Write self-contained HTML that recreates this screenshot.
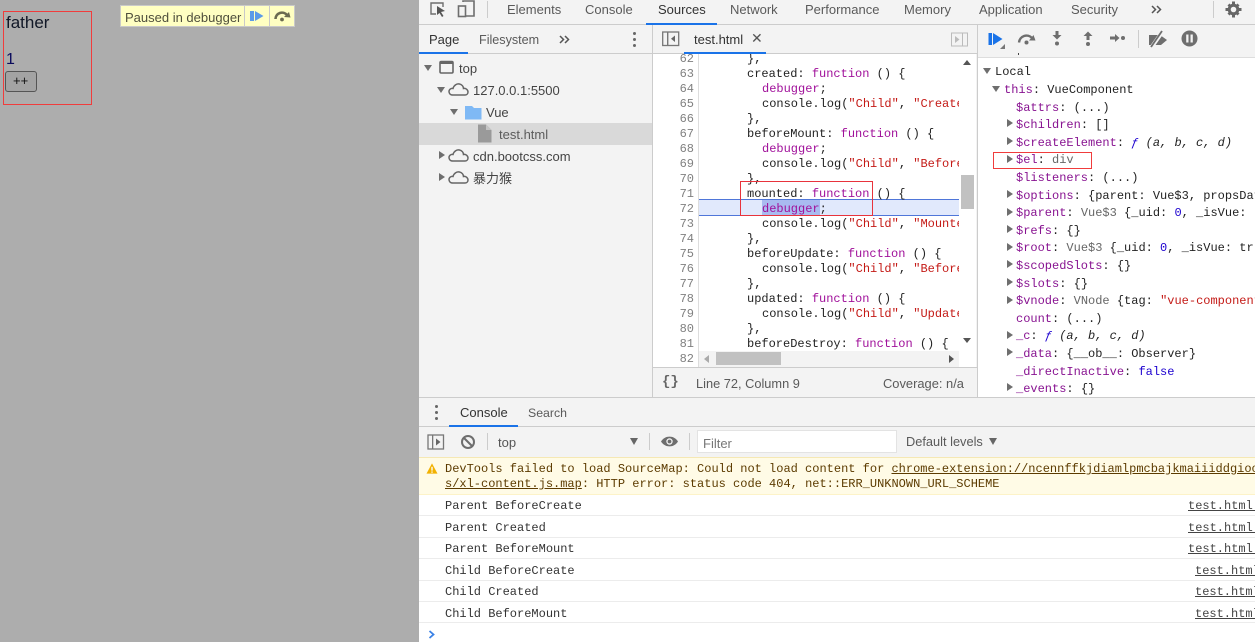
<!DOCTYPE html>
<html><head><meta charset="utf-8"><title>DevTools</title>
<style>
html,body{margin:0;padding:0}
body{position:relative;width:1255px;height:642px;overflow:hidden;background:#fff;font-family:"Liberation Sans","Noto Sans CJK SC",sans-serif;font-size:13px;color:#333}
div,span.a,svg{position:absolute}
.t{position:absolute;white-space:pre;line-height:16px;height:16px;margin-top:1px}
.tab{color:#5a5a5a;font-size:13px}
.m{position:absolute;white-space:pre;font-family:"Liberation Mono",monospace;font-size:12px;line-height:15px;height:15px;color:#222;margin-top:1px}
#sc .m{margin-top:2px}
.k{color:#a0109a}.s{color:#c41a16}.n{color:#1c00cf}.p{color:#881391}.g{color:#555}.gy{color:#666}.o{color:#222}.i{font-style:italic}
.ln{position:absolute;left:654px;width:40px;text-align:right;font-family:"Liberation Mono",monospace;font-size:12px;line-height:15px;height:15px;color:#808080;margin-top:1px}
.tr{position:absolute;width:0;height:0;border:0 solid transparent}
.r{border-left:6px solid #6e6e6e;border-top:4.5px solid transparent;border-bottom:4.5px solid transparent}
.d{border-top:6px solid #6e6e6e;border-left:4.5px solid transparent;border-right:4.5px solid transparent}
.row{position:absolute;left:419px;width:836px;height:1px;background:#ececec}
.u{text-decoration:underline}
</style></head><body>

<!-- page -->
<div style="left:0;top:0;width:419px;height:642px;background:#adadad"></div>
<div style="left:3px;top:11px;width:87px;height:92px;border:1px solid #f03c3c"></div>
<div class="t" style="left:6px;top:13px;font-size:17px;line-height:18px;height:18px;color:#111827">father</div>
<div class="t" style="left:6px;top:50px;font-size:16px;line-height:18px;height:18px;color:#0a0a5c">1</div>
<div style="left:5px;top:71px;width:30px;height:19px;background:#a3a3a3;border:1px solid #555;border-radius:3px"></div>
<div class="t" style="left:13px;top:72px;font-size:13px;color:#111">++</div>
<div style="left:120px;top:5px;width:173px;height:20px;background:#ffffc2;border:1px solid #c9c9c9"></div>
<div style="left:244px;top:6px;width:1px;height:20px;background:#c9c9c9"></div>
<div style="left:269px;top:6px;width:1px;height:20px;background:#c9c9c9"></div>
<div class="t" style="left:125px;top:9px;font-size:13px;color:#4f4f3c">Paused in debugger</div>
<svg style="left:249px;top:10px" width="15" height="12" viewBox="0 0 15 12"><rect x="1" y="1" width="4" height="10" fill="#5c9be8"/><path d="M6 1L14.500 6L6 11Z" fill="#5c9be8"/></svg>
<svg style="left:273px;top:9px" width="18" height="14" viewBox="0 0 18 14"><path d="M2.500 10A6.500 6.500 0 0 1 14 6" fill="none" stroke="#6b6b50" stroke-width="2.600"/><path d="M11 8L17.500 8.500L16 3Z" fill="#6b6b50"/><circle cx="9" cy="10.500" r="1.900" fill="#6b6b50"/></svg>

<!-- devtools bg -->
<div style="left:419px;top:0;width:836px;height:457px;background:#f3f3f3"></div>
<div style="left:419px;top:24px;width:836px;height:1px;background:#ccc"></div>
<svg style="left:429px;top:1px" width="18" height="17" viewBox="0 0 18 17"><path d="M7 13H2V2H14V6" fill="none" stroke="#6e6e6e" stroke-width="1.400"/><path d="M8 5L16 10L12 11L14.500 15L13 16L10.500 12L8 14Z" fill="#555"/></svg>
<svg style="left:457px;top:0" width="19" height="18" viewBox="0 0 19 18"><path d="M6 2V1H17V16H9" fill="none" stroke="#6e6e6e" stroke-width="1.600"/><rect x="1.500" y="6" width="7" height="10.500" fill="none" stroke="#6e6e6e" stroke-width="1.600"/></svg>
<div style="left:487px;top:1px;width:1px;height:17px;background:#ccc"></div>
<div class="t tab" style="left:507px;top:1px">Elements</div>
<div class="t tab" style="left:585px;top:1px">Console</div>
<div class="t tab" style="left:658px;top:1px;color:#333">Sources</div>
<div style="left:646px;top:23px;width:71px;height:2px;background:#1a73e8"></div>
<div class="t tab" style="left:730px;top:1px">Network</div>
<div class="t tab" style="left:805px;top:1px">Performance</div>
<div class="t tab" style="left:904px;top:1px">Memory</div>
<div class="t tab" style="left:979px;top:1px">Application</div>
<div class="t tab" style="left:1071px;top:1px">Security</div>
<svg style="left:1151px;top:5px" width="11" height="9" viewBox="0 0 11 9"><path d="M1 1L4.500 4.500L1 8M6 1L9.500 4.500L6 8" fill="none" stroke="#555" stroke-width="1.500"/></svg>
<div style="left:1213px;top:1px;width:1px;height:17px;background:#ccc"></div>
<svg style="left:1225px;top:1px" width="17" height="17" viewBox="0 0 17 17"><circle cx="8.500" cy="8.500" r="4.300" fill="none" stroke="#666" stroke-width="3"/><path d="M7 0.500H10V3H7ZM7 14H10V16.500H7ZM0.500 7H3V10H0.500ZM14 7H16.500V10H14ZM2.500 4.500L4.500 2.500L6 4L4 6ZM11 13L13 11L14.500 12.500L12.500 14.500ZM12.500 2.500L14.500 4.500L13 6L11 4ZM2.500 12.500L4 11L6 13L4.500 14.500Z" fill="#666"/></svg>

<!-- navigator -->
<div style="left:419px;top:53px;width:836px;height:1px;background:#ccc"></div>
<div style="left:652px;top:25px;width:1px;height:372px;background:#ccc"></div>
<div class="t tab" style="left:429px;top:31px;color:#333">Page</div>
<div style="left:419px;top:52px;width:49px;height:2px;background:#1a73e8"></div>
<div class="t tab" style="left:479px;top:31px;font-size:12.600px">Filesystem</div>
<svg style="left:559px;top:35px" width="11" height="9" viewBox="0 0 11 9"><path d="M1 1L4.500 4.500L1 8M6 1L9.500 4.500L6 8" fill="none" stroke="#555" stroke-width="1.500"/></svg>
<div style="left:633px;top:32px;width:3px;height:3px;border-radius:2px;background:#666"></div>
<div style="left:633px;top:38px;width:3px;height:3px;border-radius:2px;background:#666"></div>
<div style="left:633px;top:44px;width:3px;height:3px;border-radius:2px;background:#666"></div>

<div style="left:419px;top:123px;width:233px;height:22px;background:#d9d9d9"></div>
<div class="tr d" style="left:424px;top:65px"></div>
<svg style="left:439px;top:60px" width="16" height="15" viewBox="0 0 16 15"><rect x="1" y="1.500" width="13" height="11.500" rx="1.200" fill="none" stroke="#666" stroke-width="1.600"/><rect x="1" y="1.500" width="13" height="2.500" fill="#666"/></svg>
<div class="t" style="left:459px;top:60px;color:#444">top</div>
<div class="tr d" style="left:437px;top:87px"></div>
<svg style="left:448px;top:82px" width="22" height="15" viewBox="0 0 22 15"><path d="M5 13C2 13 1 11 1 9.500C1 7.500 3 6 5 6.500C6 3 9 1.500 11.500 2C14 2.500 15.500 4.500 15.500 6.500C18 6 20 8 20 10C20 12 18.500 13 17 13Z" fill="none" stroke="#666" stroke-width="1.500"/></svg>
<div class="t" style="left:473px;top:82px;color:#444">127.0.0.1:5500</div>
<div class="tr d" style="left:450px;top:109px"></div>
<svg style="left:465px;top:105px" width="17" height="15" viewBox="0 0 17 15"><path d="M0 1H7L9 3H16.500V14.500H0Z" fill="#7fb9f5"/></svg>
<div class="t" style="left:486px;top:104px;color:#444">Vue</div>
<svg style="left:478px;top:124px" width="14" height="19" viewBox="0 0 14 19"><path d="M0 0.500H8L13.500 6V18.500H0Z" fill="#9a9a9a"/><path d="M8 0.500L13.500 6H8Z" fill="#c4c4c4"/></svg>
<div class="t" style="left:499px;top:126px;color:#5c5c5c">test.html</div>
<div class="tr r" style="left:439px;top:151px"></div>
<svg style="left:448px;top:148px" width="22" height="15" viewBox="0 0 22 15"><path d="M5 13C2 13 1 11 1 9.500C1 7.500 3 6 5 6.500C6 3 9 1.500 11.500 2C14 2.500 15.500 4.500 15.500 6.500C18 6 20 8 20 10C20 12 18.500 13 17 13Z" fill="none" stroke="#666" stroke-width="1.500"/></svg>
<div class="t" style="left:473px;top:148px;color:#444">cdn.bootcss.com</div>
<div class="tr r" style="left:439px;top:173px"></div>
<svg style="left:448px;top:170px" width="22" height="15" viewBox="0 0 22 15"><path d="M5 13C2 13 1 11 1 9.500C1 7.500 3 6 5 6.500C6 3 9 1.500 11.500 2C14 2.500 15.500 4.500 15.500 6.500C18 6 20 8 20 10C20 12 18.500 13 17 13Z" fill="none" stroke="#666" stroke-width="1.500"/></svg>
<div class="t" style="left:473px;top:170px;color:#444">暴力猴</div>

<!-- editor header -->
<svg style="left:662px;top:31px" width="18" height="16" viewBox="0 0 18 16"><rect x="0.700" y="1" width="16" height="13.500" fill="none" stroke="#777" stroke-width="1.300"/><rect x="5" y="1" width="1.400" height="13.500" fill="#777"/><path d="M13 4.500V11L9 7.700Z" fill="#666"/></svg>
<div class="t" style="left:694px;top:31px;font-size:13px;color:#333">test.html</div>
<div class="t" style="left:751px;top:29px;font-size:14px;color:#555">✕</div>
<div style="left:684px;top:52px;width:82px;height:2px;background:#1a73e8"></div>
<svg style="left:951px;top:32px" width="17" height="15" viewBox="0 0 17 15"><rect x="0.500" y="1" width="16" height="13" fill="none" stroke="#bbb" stroke-width="1"/><rect x="11" y="1" width="1" height="13" fill="#bbb"/><path d="M4 4V11L8.500 7.500Z" fill="#bbb"/></svg>

<!-- code -->
<div style="left:653px;top:54px;width:323px;height:313px;background:#fff;overflow:hidden"></div>
<div style="left:698px;top:54px;width:1px;height:313px;background:#ddd"></div>
<div style="left:699px;top:200px;width:260px;height:15px;background:#e1e9fc"></div>
<div style="left:699px;top:199px;width:260px;height:1px;background:#4f76d9"></div>
<div style="left:699px;top:215px;width:260px;height:1px;background:#4f76d9"></div>
<div style="left:762px;top:200px;width:58px;height:15px;background:#a9bbf0"></div>

<div style="left:653px;top:54px;width:306px;height:313px;overflow:hidden">
<div class="ln" style="left:0;top:-3px;width:41px">62</div><div class="m" style="left:94px;top:-3px">},</div>
<div class="ln" style="left:0;top:12px;width:41px">63</div><div class="m" style="left:94px;top:12px">created: <span class="k">function</span> () {</div>
<div class="ln" style="left:0;top:27px;width:41px">64</div><div class="m" style="left:109px;top:27px"><span class="k">debugger</span>;</div>
<div class="ln" style="left:0;top:42px;width:41px">65</div><div class="m" style="left:109px;top:42px">console.log(<span class="s">"Child"</span>, <span class="s">"Created"</span></div>
<div class="ln" style="left:0;top:57px;width:41px">66</div><div class="m" style="left:94px;top:57px">},</div>
<div class="ln" style="left:0;top:72px;width:41px">67</div><div class="m" style="left:94px;top:72px">beforeMount: <span class="k">function</span> () {</div>
<div class="ln" style="left:0;top:87px;width:41px">68</div><div class="m" style="left:109px;top:87px"><span class="k">debugger</span>;</div>
<div class="ln" style="left:0;top:102px;width:41px">69</div><div class="m" style="left:109px;top:102px">console.log(<span class="s">"Child"</span>, <span class="s">"BeforeM"</span></div>
<div class="ln" style="left:0;top:117px;width:41px">70</div><div class="m" style="left:94px;top:117px">},</div>
<div class="ln" style="left:0;top:132px;width:41px">71</div><div class="m" style="left:94px;top:132px">mounted: <span class="k">function</span> () {</div>
<div class="ln" style="left:0;top:147px;width:41px">72</div><div class="m" style="left:109px;top:147px"><span class="k">debugger</span>;</div>
<div class="ln" style="left:0;top:162px;width:41px">73</div><div class="m" style="left:109px;top:162px">console.log(<span class="s">"Child"</span>, <span class="s">"Mounted"</span></div>
<div class="ln" style="left:0;top:177px;width:41px">74</div><div class="m" style="left:94px;top:177px">},</div>
<div class="ln" style="left:0;top:192px;width:41px">75</div><div class="m" style="left:94px;top:192px">beforeUpdate: <span class="k">function</span> () {</div>
<div class="ln" style="left:0;top:207px;width:41px">76</div><div class="m" style="left:109px;top:207px">console.log(<span class="s">"Child"</span>, <span class="s">"BeforeU"</span></div>
<div class="ln" style="left:0;top:222px;width:41px">77</div><div class="m" style="left:94px;top:222px">},</div>
<div class="ln" style="left:0;top:237px;width:41px">78</div><div class="m" style="left:94px;top:237px">updated: <span class="k">function</span> () {</div>
<div class="ln" style="left:0;top:252px;width:41px">79</div><div class="m" style="left:109px;top:252px">console.log(<span class="s">"Child"</span>, <span class="s">"Updated"</span></div>
<div class="ln" style="left:0;top:267px;width:41px">80</div><div class="m" style="left:94px;top:267px">},</div>
<div class="ln" style="left:0;top:282px;width:41px">81</div><div class="m" style="left:94px;top:282px">beforeDestroy: <span class="k">function</span> () {</div>
<div class="ln" style="left:0;top:297px;width:41px">82</div>
</div>
<div style="left:740px;top:181px;width:131px;height:33px;border:1px solid #e8333c"></div>

<!-- scrollbars -->
<div style="left:959px;top:54px;width:17px;height:313px;background:#fff"></div>
<div style="left:961px;top:175px;width:13px;height:34px;background:#c1c1c1"></div>
<div class="tr" style="left:963px;top:60px;border-width:0 4px 5px 4px;border-color:transparent transparent #555 transparent"></div>
<div class="tr" style="left:963px;top:338px;border-width:5px 4px 0 4px;border-color:#555 transparent transparent transparent"></div>
<div style="left:699px;top:351px;width:260px;height:16px;background:#f3f3f3"></div>
<div style="left:716px;top:352px;width:65px;height:13px;background:#c1c1c1"></div>
<div class="tr" style="left:704px;top:355px;border-width:4px 5px 4px 0;border-color:transparent #aaa transparent transparent"></div>
<div class="tr" style="left:949px;top:355px;border-width:4px 0 4px 5px;border-color:transparent transparent transparent #555"></div>

<!-- editor footer -->
<div style="left:653px;top:367px;width:324px;height:1px;background:#ccc"></div>
<div class="t" style="left:662px;top:373px;font-family:'Liberation Mono',monospace;font-size:14px;font-weight:bold;color:#666">{}</div>
<div class="t" style="left:696px;top:375px;font-size:12.800px;color:#5a5a5a">Line 72, Column 9</div>
<div class="t" style="left:883px;top:375px;font-size:12.900px;color:#5a5a5a">Coverage: n/a</div>

<!-- sidebar -->
<div style="left:977px;top:25px;width:1px;height:372px;background:#ccc"></div>
<div style="left:978px;top:54px;width:277px;height:343px;background:#fff"></div>
<div style="left:978px;top:25px;width:277px;height:32px;background:#f3f3f3"></div>
<div style="left:978px;top:57px;width:277px;height:1px;background:#ddd"></div>
<div style="left:1018px;top:53px;width:1px;height:2px;background:#444"></div>
<svg style="left:988px;top:32px" width="18" height="17" viewBox="0 0 18 17"><rect x="0.500" y="1" width="3.500" height="12" fill="#1a73e8"/><path d="M5 1L14.500 7L5 13Z" fill="#1a73e8"/><path d="M17 12V17H12Z" fill="#777"/></svg>
<svg style="left:1016px;top:31px" width="20" height="15" viewBox="0 0 20 15"><path d="M3 11.500A7.500 7.500 0 0 1 16 7" fill="none" stroke="#6e6e6e" stroke-width="2.400"/><path d="M13 9.500L19.500 9.500L17.500 4Z" fill="#6e6e6e"/><circle cx="10.500" cy="11.500" r="2" fill="#6e6e6e"/></svg>
<svg style="left:1051px;top:31px" width="12" height="16" viewBox="0 0 12 16"><path d="M4.500 0H7.500V4H10.500L6 8.500L1.500 4H4.500Z" fill="#6e6e6e"/><circle cx="6" cy="12.500" r="2" fill="#6e6e6e"/></svg>
<svg style="left:1082px;top:31px" width="12" height="16" viewBox="0 0 12 16"><path d="M4.500 9H7.500V5H10.500L6 0.500L1.500 5H4.500Z" fill="#6e6e6e"/><circle cx="6" cy="13" r="2" fill="#6e6e6e"/></svg>
<svg style="left:1110px;top:32px" width="16" height="12" viewBox="0 0 16 12"><path d="M0 4.500H5V2L9.500 6L5 10V7.500H0Z" fill="#6e6e6e"/><circle cx="13" cy="6" r="2" fill="#6e6e6e"/></svg>
<div style="left:1138px;top:30px;width:1px;height:18px;background:#ccc"></div>
<svg style="left:1148px;top:30px" width="20" height="18" viewBox="0 0 20 18"><path d="M1 5H12L19 10L13 15H1Z" fill="#6e6e6e"/><path d="M3 18L15 1" stroke="#f3f3f3" stroke-width="4"/><path d="M3 17L14 1" stroke="#6e6e6e" stroke-width="1.800"/></svg>
<svg style="left:1181px;top:30px" width="17" height="17" viewBox="0 0 17 17"><circle cx="8.500" cy="8.500" r="8" fill="#6e6e6e"/><rect x="5.200" y="4.500" width="2.300" height="8" fill="#f3f3f3"/><rect x="9.500" y="4.500" width="2.300" height="8" fill="#f3f3f3"/></svg>

<div class="tr d" style="left:983px;top:68px"></div>
<div class="m" style="left:995px;top:64px;color:#222">Local</div>
<div class="tr d" style="left:992px;top:86px"></div>
<div class="m" style="left:1004px;top:82px"><span class="p">this</span>: VueComponent</div>
<div id="sc" style="left:978px;top:98px;width:277px;height:298px;overflow:hidden">
<div class="m" style="left:38px;top:1px"><span class="p">$attrs</span>: (...)</div>
<div class="tr r" style="left:29px;top:21px"></div><div class="m" style="left:38px;top:18px"><span class="p">$children</span>: []</div>
<div class="tr r" style="left:29px;top:39px"></div><div class="m" style="left:38px;top:36px"><span class="p">$createElement</span>: <span class="i"><span class="n">ƒ</span> (a, b, c, d)</span></div>
<div class="tr r" style="left:29px;top:57px"></div><div class="m" style="left:38px;top:53px"><span class="p">$el</span>: <span class="gy">div</span></div>
<div class="m" style="left:38px;top:71px"><span class="p">$listeners</span>: (...)</div>
<div class="tr r" style="left:29px;top:92px"></div><div class="m" style="left:38px;top:89px"><span class="p">$options</span>: {parent: Vue$3, propsData</div>
<div class="tr r" style="left:29px;top:110px"></div><div class="m" style="left:38px;top:106px"><span class="p">$parent</span>: <span class="gy">Vue$3</span> {_uid: <span class="n">0</span>, _isVue:</div>
<div class="tr r" style="left:29px;top:127px"></div><div class="m" style="left:38px;top:124px"><span class="p">$refs</span>: {}</div>
<div class="tr r" style="left:29px;top:145px"></div><div class="m" style="left:38px;top:141px"><span class="p">$root</span>: <span class="gy">Vue$3</span> {_uid: <span class="n">0</span>, _isVue: tr</div>
<div class="tr r" style="left:29px;top:162px"></div><div class="m" style="left:38px;top:159px"><span class="p">$scopedSlots</span>: {}</div>
<div class="tr r" style="left:29px;top:180px"></div><div class="m" style="left:38px;top:177px"><span class="p">$slots</span>: {}</div>
<div class="tr r" style="left:29px;top:198px"></div><div class="m" style="left:38px;top:194px"><span class="p">$vnode</span>: <span class="gy">VNode</span> {tag: <span class="s">"vue-component</span></div>
<div class="m" style="left:38px;top:212px"><span class="p">count</span>: (...)</div>
<div class="tr r" style="left:29px;top:233px"></div><div class="m" style="left:38px;top:229px"><span class="p">_c</span>: <span class="i"><span class="n">ƒ</span> (a, b, c, d)</span></div>
<div class="tr r" style="left:29px;top:250px"></div><div class="m" style="left:38px;top:247px"><span class="p">_data</span>: {__ob__: Observer}</div>
<div class="m" style="left:38px;top:265px"><span class="p">_directInactive</span>: <span class="n">false</span></div>
<div class="tr r" style="left:29px;top:285px"></div><div class="m" style="left:38px;top:282px"><span class="p">_events</span>: {}</div>
</div>
<div style="left:993px;top:152px;width:97px;height:15px;border:1px solid #f03c3c"></div>

<!-- drawer -->
<div style="left:419px;top:397px;width:836px;height:1px;background:#ccc"></div>
<div style="left:419px;top:398px;width:836px;height:59px;background:#f3f3f3"></div>
<div style="left:419px;top:426px;width:836px;height:1px;background:#ccc"></div>
<div style="left:435px;top:405px;width:3px;height:3px;border-radius:2px;background:#666"></div>
<div style="left:435px;top:411px;width:3px;height:3px;border-radius:2px;background:#666"></div>
<div style="left:435px;top:417px;width:3px;height:3px;border-radius:2px;background:#666"></div>
<div class="t tab" style="left:460px;top:404px;color:#333">Console</div>
<div style="left:449px;top:425px;width:69px;height:2px;background:#1a73e8"></div>
<div class="t tab" style="left:528px;top:404px;font-size:12.300px">Search</div>

<svg style="left:427px;top:434px" width="18" height="16" viewBox="0 0 18 16"><rect x="1" y="1" width="15.500" height="14" fill="none" stroke="#777" stroke-width="1.300"/><rect x="5" y="1" width="1.300" height="14" fill="#777"/><path d="M9 4.500V11.500L13.500 8Z" fill="#666"/></svg>
<svg style="left:460px;top:434px" width="16" height="16" viewBox="0 0 16 16"><circle cx="8" cy="8" r="6" fill="none" stroke="#6e6e6e" stroke-width="2"/><path d="M3.500 3.500L12.500 12.500" stroke="#6e6e6e" stroke-width="2"/></svg>
<div style="left:487px;top:433px;width:1px;height:17px;background:#ccc"></div>
<div class="t" style="left:498px;top:434px;color:#555">top</div>
<div class="tr" style="left:630px;top:438px;border-width:7px 4.500px 0 4.500px;border-color:#666 transparent transparent transparent"></div>
<div style="left:649px;top:433px;width:1px;height:17px;background:#ccc"></div>
<svg style="left:660px;top:434px" width="19" height="15" viewBox="0 0 19 15"><path d="M1 7.500C5 1 14 1 18 7.500C14 14 5 14 1 7.500Z" fill="#6e6e6e"/><circle cx="9.500" cy="7.500" r="3.200" fill="#f3f3f3"/><circle cx="9.500" cy="7.500" r="1.900" fill="#6e6e6e"/></svg>
<div style="left:689px;top:433px;width:1px;height:17px;background:#ccc"></div>
<div style="left:697px;top:430px;width:198px;height:21px;background:#fff;border:1px solid #e3e3e3"></div>
<div class="t" style="left:703px;top:435px;color:#777">Filter</div>
<div class="t" style="left:906px;top:433px;color:#5a5a5a;font-size:12.800px">Default levels</div>
<div class="tr" style="left:989px;top:438px;border-width:7px 4px 0 4px;border-color:#666 transparent transparent transparent"></div>

<!-- warning -->
<div style="left:419px;top:457px;width:836px;height:38px;background:#fffbe6"></div>
<div style="left:419px;top:457px;width:836px;height:1px;background:#f5e8b4"></div>
<div style="left:419px;top:494px;width:836px;height:1px;background:#fdf3c8"></div>
<svg style="left:426px;top:463px" width="12" height="11" viewBox="0 0 14 13"><path d="M7 0.500L13.500 12.500H0.500Z" fill="#f2b100"/><rect x="6.200" y="4.500" width="1.600" height="4.500" fill="#fff"/><rect x="6.200" y="10" width="1.600" height="1.500" fill="#fff"/></svg>
<div class="m" style="left:445px;top:461px;color:#5c3b00">DevTools failed to load SourceMap: Could not load content for <span class="u">chrome-extension://ncennffkjdiamlpmcbajkmaiiiddgioo</span></div>
<div class="m" style="left:445px;top:476px;color:#5c3b00"><span class="u">s/xl-content.js.map</span>: HTTP error: status code 404, net::ERR_UNKNOWN_URL_SCHEME</div>

<!-- log rows -->
<div class="m" style="left:445px;top:498px;color:#333">Parent BeforeCreate</div><div class="m u" style="left:1188px;top:498px;color:#444">test.html:</div>
<div class="row" style="top:515px"></div>
<div class="m" style="left:445px;top:520px;color:#333">Parent Created</div><div class="m u" style="left:1188px;top:520px;color:#444">test.html:</div>
<div class="row" style="top:537px"></div>
<div class="m" style="left:445px;top:541px;color:#333">Parent BeforeMount</div><div class="m u" style="left:1188px;top:541px;color:#444">test.html:</div>
<div class="row" style="top:558px"></div>
<div class="m" style="left:445px;top:563px;color:#333">Child BeforeCreate</div><div class="m u" style="left:1195px;top:563px;color:#444">test.html</div>
<div class="row" style="top:580px"></div>
<div class="m" style="left:445px;top:584px;color:#333">Child Created</div><div class="m u" style="left:1195px;top:584px;color:#444">test.html</div>
<div class="row" style="top:601px"></div>
<div class="m" style="left:445px;top:606px;color:#333">Child BeforeMount</div><div class="m u" style="left:1195px;top:606px;color:#444">test.html</div>
<div class="row" style="top:622px"></div>
<svg style="left:428px;top:630px" width="8" height="9" viewBox="0 0 8 9"><path d="M1.500 1L5.500 4.500L1.500 8" fill="none" stroke="#3b82e6" stroke-width="1.800"/></svg>
</body></html>
